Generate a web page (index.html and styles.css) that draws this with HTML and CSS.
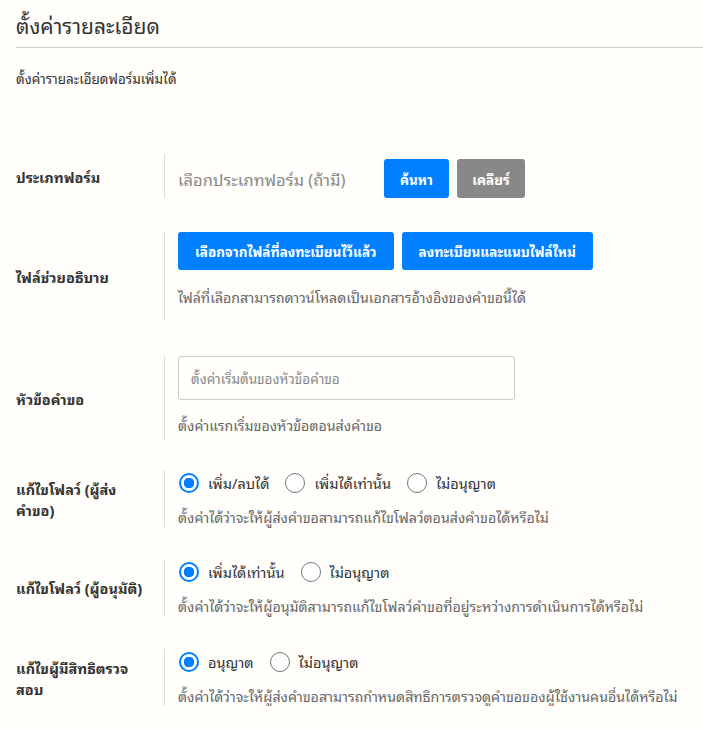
FILE: index.html
```html
<!DOCTYPE html>
<html lang="th">
<head>
<meta charset="utf-8">
<link rel="stylesheet" href="styles.css">
</head>
<body>
<div class="page">
  <h1 class="title">ตั้งค่ารายละเอียด</h1>
  <hr class="divider">
  <p class="intro">ตั้งค่ารายละเอียดฟอร์มเพิ่มได้</p>

  <div class="row row-type">
    <div class="label">ประเภทฟอร์ม</div>
    <div class="content content-inline">
      <span class="placeholder">เลือกประเภทฟอร์ม (ถ้ามี)</span>
      <button class="btn btn-blue btn-search">ค้นหา</button>
      <button class="btn btn-gray">เคลียร์</button>
    </div>
  </div>

  <div class="row row-file">
    <div class="label">ไฟล์ช่วยอธิบาย</div>
    <div class="content">
      <div class="btns">
        <button class="btn btn-blue btn-wide">เลือกจากไฟล์ที่ลงทะเบียนไว้แล้ว</button>
        <button class="btn btn-blue btn-wide">ลงทะเบียนและแนบไฟล์ใหม่</button>
      </div>
      <p class="help help-file">ไฟล์ที่เลือกสามารถดาวน์โหลดเป็นเอกสารอ้างอิงของคำขอนี้ได้</p>
    </div>
  </div>

  <div class="row row-subject">
    <div class="label">หัวข้อคำขอ</div>
    <div class="content">
      <input class="text-input" type="text" placeholder="ตั้งค่าเริ่มต้นของหัวข้อคำขอ">
      <p class="help help-subject">ตั้งค่าแรกเริ่มของหัวข้อตอนส่งคำขอ</p>
    </div>
  </div>

  <div class="row row-radio row-flow1">
    <div class="label">แก้ไขโฟลว์ (ผู้ส่ง<br>คำขอ)</div>
    <div class="content">
      <div class="radios">
        <label class="opt"><input type="radio" name="f1" checked><span>เพิ่ม/ลบได้</span></label>
        <label class="opt"><input type="radio" name="f1"><span>เพิ่มได้เท่านั้น</span></label>
        <label class="opt"><input type="radio" name="f1"><span>ไม่อนุญาต</span></label>
      </div>
      <p class="help">ตั้งค่าได้ว่าจะให้ผู้ส่งคำขอสามารถแก้ไขโฟลว์ตอนส่งคำขอได้หรือไม่</p>
    </div>
  </div>

  <div class="row row-radio row-flow2">
    <div class="label">แก้ไขโฟลว์ (ผู้อนุมัติ)</div>
    <div class="content">
      <div class="radios">
        <label class="opt"><input type="radio" name="f2" checked><span>เพิ่มได้เท่านั้น</span></label>
        <label class="opt"><input type="radio" name="f2"><span>ไม่อนุญาต</span></label>
      </div>
      <p class="help">ตั้งค่าได้ว่าจะให้ผู้อนุมัติสามารถแก้ไขโฟลว์คำขอที่อยู่ระหว่างการดำเนินการได้หรือไม่</p>
    </div>
  </div>

  <div class="row row-radio row-perm">
    <div class="label">แก้ไขผู้มีสิทธิตรวจ<br>สอบ</div>
    <div class="content">
      <div class="radios">
        <label class="opt"><input type="radio" name="f3" checked><span>อนุญาต</span></label>
        <label class="opt"><input type="radio" name="f3"><span>ไม่อนุญาต</span></label>
      </div>
      <p class="help">ตั้งค่าได้ว่าจะให้ผู้ส่งคำขอสามารถกำหนดสิทธิการตรวจดูคำขอของผู้ใช้งานคนอื่นได้หรือไม่</p>
    </div>
  </div>
</div>
</body>
</html>
```

FILE: styles.css
```css
* { box-sizing: border-box; }
html, body {
  margin: 0;
  background: #fffefb;
}
body {
  font-family: "Noto Sans Thai Looped", "Noto Sans Thai", "Noto Sans", "Liberation Sans", sans-serif;
  color: #333;
}
.page {
  padding: 0 0 0 16px;
}
.title {
  margin: 0;
  padding-top: 10px;
  font-size: 21px;
  font-weight: normal;
  line-height: 30px;
  color: #333;
}
.divider {
  margin: 7px 0 0 0;
  border: 0;
  border-top: 1px solid #ccc;
}
.intro {
  margin: 20px 0 0 0;
  font-size: 13.5px;
  line-height: 20px;
  color: #333;
}
.row {
  display: flex;
  align-items: center;
}
.label {
  width: 148px;
  flex: none;
  font-size: 14.5px;
  font-weight: bold;
  line-height: 21px;
  color: #333;
}
.content {
  border-left: 1px solid #ddd;
  padding-left: 13px;
  align-self: stretch;
}
.content-inline {
  display: flex;
  align-items: center;
  padding-top: 5px;
}
.row-type { margin-top: 66px; }
.row-file { margin-top: 33px; }
.row-subject { margin-top: 35px; }
.row-flow1 { margin-top: 30px; }
.row-flow2 { margin-top: 32px; }
.row-perm { margin-top: 33px; }

.placeholder {
  font-size: 16.5px;
  color: #888;
  width: 206px;
}
.btn {
  font-family: inherit;
  border: 0;
  border-radius: 3px;
  color: #fff;
  font-size: 13.5px;
  font-weight: bold;
  height: 39px;
  padding: 0;
  cursor: pointer;
}
.btn-blue { background: #0080ff; }
.btn-gray { background: #888; margin-left: 8px; width: 68px; }
.btn-search { width: 65px; }
.btns {
  display: flex;
  gap: 8px;
  padding-top: 1px;
}
.btn-wide { height: 38px; padding: 0 17px; }
.help {
  margin: 0;
  font-size: 14.2px;
  line-height: 20px;
  color: #666;
}
.help-file { margin-top: 17px; padding-bottom: 14px; }
.text-input {
  display: block;
  width: 337px;
  height: 44px;
  border: 1px solid #ccc;
  border-radius: 3px;
  background: #fffefb;
  padding: 0 12px;
  font-family: inherit;
  font-size: 13.5px;
  color: #333;
}
.text-input::placeholder { color: #888; }
.help-subject { margin-top: 15px; padding-bottom: 5px; }

.radios {
  display: flex;
  align-items: center;
  padding-top: 1px;
  height: 24px;
}
.opt {
  display: flex;
  align-items: center;
  margin-right: 15px;
  font-size: 14.5px;
  color: #333;
}
.opt input {
  appearance: none;
  -webkit-appearance: none;
  margin: 0 9px 0 1px;
  width: 20px;
  height: 20px;
  border: 1px solid #777;
  border-radius: 50%;
  background: #fff;
}
.opt input:checked {
  border: 2px solid #0080ff;
  background: radial-gradient(circle, #0080ff 0 5px, #fff 5.5px);
}
.row-radio .help { margin-top: 13px; padding-bottom: 0; }
```
